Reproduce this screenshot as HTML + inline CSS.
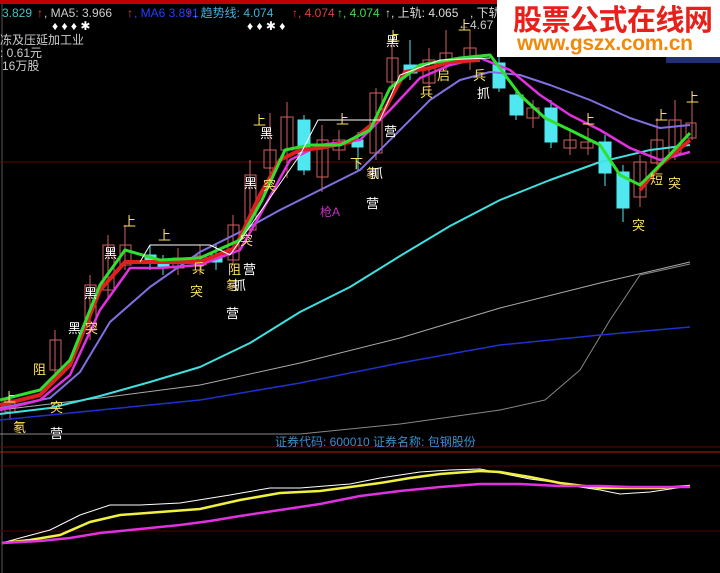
<!DOCTYPE html>
<html><head><meta charset="utf-8"><style>
body{margin:0;background:#000;width:720px;height:573px;overflow:hidden;position:relative;font-family:"Liberation Sans","Noto Sans CJK SC",sans-serif}
svg{position:absolute;left:0;top:0}
.logo{position:absolute;left:497px;top:0;width:223px;height:57px;background:#fff;overflow:hidden}
.l1{position:absolute;left:16px;top:-3px;font:bold 29px "Noto Sans CJK SC",sans-serif;color:#e8201a;white-space:nowrap;letter-spacing:-0.5px}
.l2{position:absolute;left:20px;top:32px;font:bold 21px "Liberation Sans",sans-serif;color:#f08a0a;white-space:nowrap;letter-spacing:-0.3px}
</style></head><body>
<svg width="720" height="573" viewBox="0 0 720 573" font-family="Liberation Sans, Noto Sans CJK SC, sans-serif">
<rect x="0" y="0" width="720" height="4" fill="#c00000"/>
<line x1="2" y1="4" x2="2" y2="573" stroke="#555" />
<line x1="0" y1="162" x2="720" y2="162" stroke="#6a0000"/>
<line x1="0" y1="447" x2="720" y2="447" stroke="#6a0000"/>
<line x1="0" y1="452" x2="720" y2="452" stroke="#b02000"/>
<line x1="0" y1="466" x2="720" y2="466" stroke="#5a0000"/>
<line x1="0" y1="531" x2="720" y2="531" stroke="#5a0000"/>
<g font-size="12">
<text x="2" y="17" fill="#40c0c0">3.829</text><text x="37" y="17" fill="#e04040">↑</text><text x="44" y="17" fill="#ccc">, MA5: 3.966</text><text x="127" y="17" fill="#e04040">↑</text><text x="134" y="17" fill="#2040ff">, MA6  3.891</text><text x="186" y="17" fill="#e04040">↑</text><text x="194" y="17" fill="#40b0e0">, 趋势线: 4.074</text><text x="292" y="17" fill="#e04040">↑, 4.074</text><text x="337" y="17" fill="#40e040">↑, 4.074</text><text x="385" y="17" fill="#ddd">↑, 上轨: 4.065</text><text x="470" y="17" fill="#ddd">, 下轨</text>
<text x="52" y="30" fill="#fff" font-size="12">♦  ♦  ♦  ✱</text>
<text x="247" y="30" fill="#fff" font-size="12">♦  ♦  ✱  ♦</text>
<text x="0" y="44" fill="#ccc">冻及压延加工业</text>
<text x="0" y="57" fill="#ccc">: 0.61元</text>
<text x="2" y="70" fill="#ccc">16万股</text>
<text x="458" y="29" fill="#ccc">←4.67</text>
<text x="275" y="446" fill="#3a8ed0">证券代码: 600010  证券名称: 包钢股份</text>
</g>
<rect x="666" y="57" width="54" height="6" fill="#203070"/>
<g stroke="#d06060" fill="none">
<line x1="10" y1="395" x2="10" y2="420"/><rect x="5" y="400" width="10" height="12"/>
<line x1="55" y1="330" x2="55" y2="380"/><rect x="50" y="340" width="11" height="30"/>
<line x1="90" y1="275" x2="90" y2="340"/><rect x="85" y="285" width="11" height="45"/>
<line x1="108" y1="235" x2="108" y2="300"/><rect x="103" y="245" width="11" height="45"/>
<line x1="125" y1="225" x2="125" y2="270"/><rect x="120" y="245" width="11" height="20"/>
<line x1="178" y1="248" x2="178" y2="275"/><rect x="173" y="258" width="11" height="10"/>
<line x1="200" y1="245" x2="200" y2="275"/><rect x="195" y="256" width="11" height="9"/>
<line x1="233" y1="215" x2="233" y2="265"/><rect x="228" y="225" width="11" height="35"/>
<line x1="250" y1="160" x2="250" y2="235"/><rect x="245" y="175" width="11" height="55"/>
<line x1="270" y1="113" x2="270" y2="178"/><rect x="264" y="150" width="12" height="18"/>
<line x1="287" y1="102" x2="287" y2="178"/><rect x="281" y="117" width="12" height="33"/>
<line x1="322" y1="125" x2="322" y2="192"/><rect x="317" y="140" width="11" height="37"/>
<line x1="339" y1="130" x2="339" y2="160"/><rect x="333" y="140" width="12" height="10"/>
<line x1="376" y1="88" x2="376" y2="160"/><rect x="370" y="93" width="12" height="60"/>
<line x1="392" y1="40" x2="392" y2="90"/><rect x="387" y="58" width="11" height="24"/>
<line x1="429" y1="48" x2="429" y2="95"/><rect x="423" y="60" width="12" height="23"/>
<line x1="446" y1="30" x2="446" y2="70"/><rect x="440" y="53" width="12" height="10"/>
<line x1="470" y1="30" x2="470" y2="70"/><rect x="464" y="48" width="12" height="12"/>
<line x1="533" y1="100" x2="533" y2="128"/><rect x="527" y="108" width="12" height="10"/>
<line x1="570" y1="130" x2="570" y2="155"/><rect x="564" y="140" width="12" height="8"/>
<line x1="588" y1="128" x2="588" y2="155"/><rect x="581" y="142" width="12" height="6"/>
<line x1="640" y1="155" x2="640" y2="207"/><rect x="634" y="162" width="12" height="35"/>
<line x1="657" y1="118" x2="657" y2="165"/><rect x="651" y="140" width="12" height="23"/>
<line x1="675" y1="100" x2="675" y2="160"/><rect x="669" y="120" width="12" height="33"/>
<line x1="692" y1="95" x2="692" y2="140"/><rect x="686" y="123" width="10" height="15"/>
</g>
<g fill="#50e8f0" stroke="#50e8f0">
<line x1="150" y1="245" x2="150" y2="270"/><rect x="145" y="255" width="11" height="7"/>
<line x1="163" y1="255" x2="163" y2="275"/><rect x="158" y="262" width="11" height="6"/>
<line x1="216" y1="245" x2="216" y2="270"/><rect x="211" y="255" width="11" height="7"/>
<line x1="304" y1="115" x2="304" y2="175"/><rect x="298" y="120" width="12" height="50"/>
<line x1="358" y1="132" x2="358" y2="170"/><rect x="352" y="140" width="11" height="7"/>
<line x1="410" y1="40" x2="410" y2="80"/><rect x="404" y="65" width="13" height="8"/>
<line x1="499" y1="55" x2="499" y2="92"/><rect x="493" y="63" width="12" height="25"/>
<line x1="516" y1="88" x2="516" y2="120"/><rect x="510" y="95" width="13" height="20"/>
<line x1="551" y1="100" x2="551" y2="148"/><rect x="545" y="108" width="12" height="34"/>
<line x1="605" y1="135" x2="605" y2="186"/><rect x="599" y="142" width="12" height="31"/>
<line x1="623" y1="165" x2="623" y2="222"/><rect x="617" y="172" width="12" height="36"/>
</g>
<g fill="none" stroke-linejoin="round">
<polyline stroke="#888" stroke-width="1" points="0,434 300,434 400,424 500,410 545,400 580,370 610,320 640,275 690,264"/>
<polyline stroke="#aaa" points="0,410 100,398 200,385 300,363 400,338 500,308 600,283 690,262"/>
<polyline stroke="#2030d0" stroke-width="1.5" points="0,420 100,410 200,400 300,383 400,363 500,345 600,335 690,327"/>
<polyline stroke="#40e0e0" stroke-width="2" points="0,414 50,408 100,396 150,382 200,367 250,343 300,312 350,287 400,256 450,226 500,200 550,180 600,162 650,150 690,145"/>
<polyline stroke="#8070e0" stroke-width="2" points="0,408 50,398 80,372 110,322 150,287 200,252 240,232 280,210 320,190 360,170 400,130 430,100 460,80 490,72 520,75 550,85 590,100 630,118 660,128 690,125"/>
<polyline stroke="#e030e0" stroke-width="2.5" points="0,410 40,400 70,375 100,310 130,268 160,268 200,265 240,250 260,215 290,160 320,145 360,140 390,110 420,78 450,65 480,58 510,70 540,95 570,115 600,130 630,148 660,160 690,152"/>
<polyline stroke="#e02020" stroke-width="4" points="0,405 40,395 70,365 100,290 125,262 160,262 200,262 235,248 260,195 280,160 300,150 320,148 350,142 380,118 405,72 430,68 450,62 480,60"/>
<polyline stroke="#e02020" stroke-width="4" points="640,190 660,165 690,140"/>
<polyline stroke="#30e030" stroke-width="3" points="0,400 40,390 70,360 100,285 125,250 160,260 200,258 240,240 262,200 285,150 310,145 340,145 370,130 390,88 420,65 460,58 490,55 505,75 520,95 545,118 570,130 600,145 620,175 640,185 660,165 690,133"/>
<polyline stroke="#fff" stroke-width="1" points="140,262 150,245 210,245 230,255 300,155 318,120 380,120 400,75 440,60 490,58"/>
</g>
<g font-size="13">
<g fill="#ffe060"><text x="123" y="226">上</text><text x="3" y="402">上</text><text x="158" y="240">上</text><text x="336" y="124">上</text><text x="387" y="41">上</text><text x="458" y="30">上</text><text x="582" y="124">上</text><text x="655" y="120">上</text><text x="686" y="102">上</text><text x="253" y="125">上</text>
<text x="263" y="190">突</text><text x="190" y="296">突</text><text x="240" y="245">突</text><text x="632" y="230">突</text><text x="668" y="188">突</text><text x="50" y="412">突</text><text x="85" y="333">突</text>
<text x="192" y="273">兵</text><text x="420" y="97">兵</text><text x="473" y="80">兵</text><text x="437" y="80">启</text><text x="228" y="274">阻</text><text x="33" y="374">阻</text><text x="650" y="184">短</text><text x="350" y="168">下</text><text x="366" y="178">氡</text><text x="226" y="290">氡</text><text x="13" y="432">氡</text>
</g>
<g fill="#fff"><text x="104" y="258">黑</text><text x="84" y="298">黑</text><text x="68" y="333">黑</text><text x="260" y="138">黑</text><text x="244" y="188">黑</text><text x="386" y="46">黑</text>
<text x="243" y="274">营</text><text x="226" y="318">营</text><text x="366" y="208">营</text><text x="384" y="136">营</text><text x="50" y="438">营</text><text x="233" y="290">抓</text><text x="370" y="178">抓</text><text x="477" y="98">抓</text></g>
<text x="320" y="216" fill="#c030c0" font-size="12">枪A</text>
</g>
<g fill="none">
<polyline stroke="#fff" stroke-width="1" points="2,543 20,538 50,530 80,515 110,505 140,505 180,503 230,495 270,488 300,488 350,484 380,478 400,475 420,472 450,470 480,469 500,473 530,479 560,483 580,487 600,490 620,494 650,492 690,486"/>
<polyline stroke="#f0f040" stroke-width="2.5" points="2,543 30,540 60,535 90,522 120,515 160,512 200,509 240,500 280,493 320,491 350,487 380,483 410,478 440,474 480,471 500,472 530,477 560,483 600,488 630,488 660,488 690,486"/>
<polyline stroke="#e030e0" stroke-width="2.5" points="2,543 40,541 70,538 100,533 140,529 180,525 210,521 240,516 280,510 320,504 360,496 400,491 440,487 480,484 520,484 560,486 600,486 630,487 660,487 690,487"/>
</g>
</svg>
<div class="logo"><div class="l1">股票公式在线网</div><div class="l2">www.gszx.com.cn</div></div>
</body></html>
